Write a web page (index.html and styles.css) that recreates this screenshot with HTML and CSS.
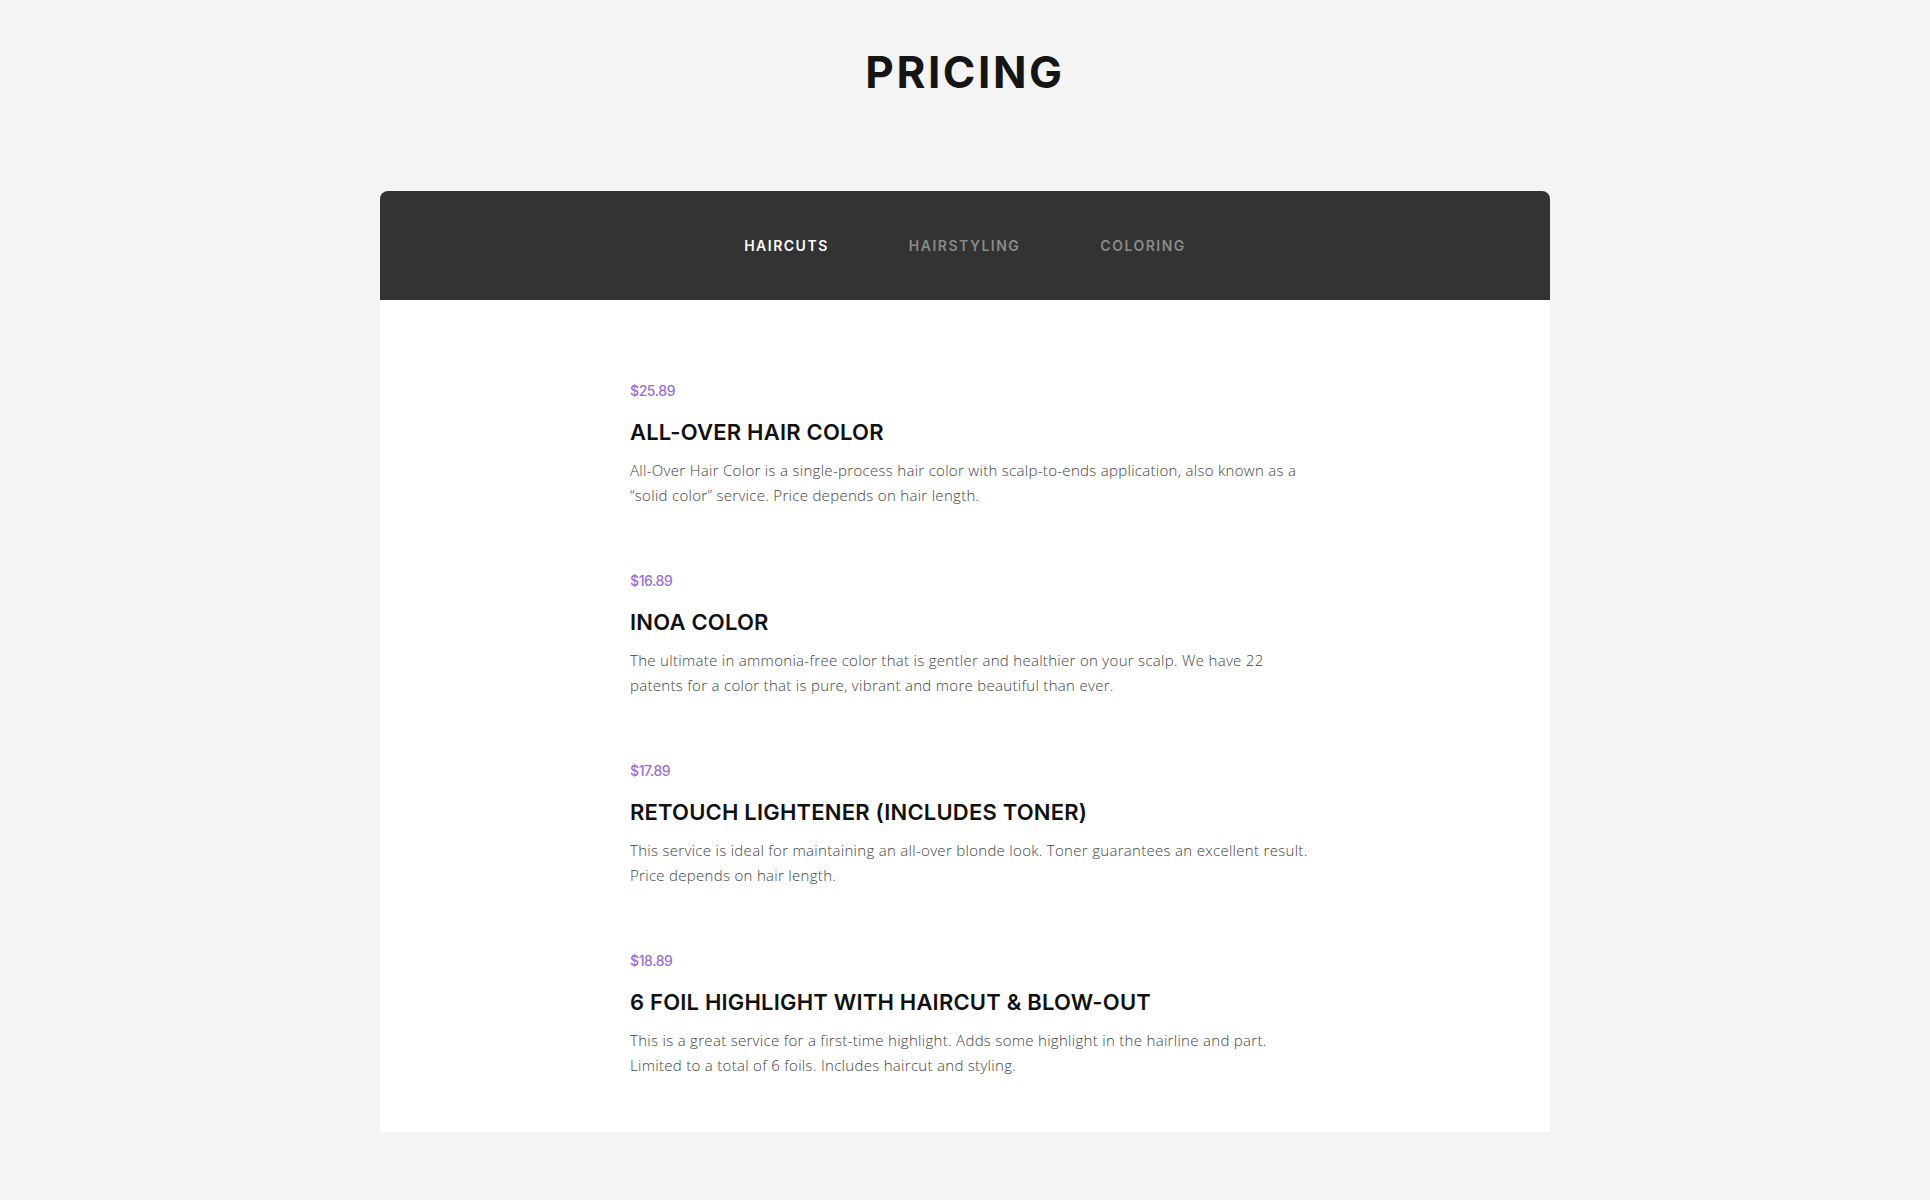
FILE: index.html
```html
<!DOCTYPE html>
<html lang="en">
  <head>
    <meta charset="UTF-8" />
    <meta name="viewport" content="width=device-width, initial-scale=1.0" />
    <title>Pricing</title>
    <link rel="stylesheet" href="styles.css">
  </head>
  <body>
    <section class="pricing">
      <h1 class="pricing-title">PRICING</h1>

      <div class="pricing-card">
        <!-- Pestañas -->
        <nav class="tabs">
          <a class="tab active" href="#">HAIRCUTS</a>
          <a class="tab" href="#">HAIRSTYLING</a>
          <a class="tab" href="#">COLORING</a>
        </nav>

        <div class="price-list">
          <div class="price-item">
            <p class="price">$25.89</p>
            <h2 class="item-title">ALL-OVER HAIR COLOR</h2>
            <p class="item-text">
              All-Over Hair Color is a single-process hair color with scalp-to-ends application, also known as a<br />
              “solid color” service. Price depends on hair length.
            </p>
          </div>
          <div class="price-item">
            <p class="price">$16.89</p>
            <h2 class="item-title">INOA COLOR</h2>
            <p class="item-text">
              The ultimate in ammonia-free color that is gentler and healthier on your scalp. We have 22<br />
              patents for a color that is pure, vibrant and more beautiful than ever.
            </p>
          </div>
          <div class="price-item">
            <p class="price">$17.89</p>
            <h2 class="item-title">RETOUCH LIGHTENER (INCLUDES TONER)</h2>
            <p class="item-text">
              This service is ideal for maintaining an all-over blonde look. Toner guarantees an excellent result.<br />
              Price depends on hair length.
            </p>
          </div>
          <div class="price-item">
            <p class="price">$18.89</p>
            <h2 class="item-title">6 FOIL HIGHLIGHT WITH HAIRCUT &amp; BLOW-OUT</h2>
            <p class="item-text">
              This is a great service for a first-time highlight. Adds some highlight in the hairline and part.<br />
              Limited to a total of 6 foils. Includes haircut and styling.
            </p>
          </div>
        </div>
      </div>
    </section>
  </body>
</html>
```

FILE: styles.css
```css
body {
  margin: 0;
  padding: 0;
  background: #f4f4f4;
  font-family: "Open Sans", sans-serif;
  color: #222;
  min-height: 100vh;
}

.pricing {
  display: flex;
  flex-direction: column;
  align-items: center;
  padding-top: 46px;
}

.pricing-title {
  font-family: "Inter", sans-serif;
  font-size: 44px;
  font-weight: 700;
  line-height: 52px;
  letter-spacing: 2.6px;
  color: #151515;
  margin: 0 0 93px 0;
}

.pricing-card {
  width: 1170px;
  background: white;
  border-radius: 8px 8px 0 0;
  overflow: hidden;
}

.tabs {
  height: 109px;
  background: #333;
  display: flex;
  justify-content: center;
  align-items: center;
  gap: 80px;
}

.tab {
  font-family: "Inter", sans-serif;
  font-size: 14px;
  font-weight: 600;
  letter-spacing: 1.5px;
  color: #8a8a8a;
  text-decoration: none;
}

.tab.active {
  color: white;
}

.price-list {
  width: 680px;
  margin: 0 auto;
  padding: 81px 0 54px 10px;
  display: flex;
  flex-direction: column;
  gap: 63px;
}

.price {
  font-family: "Inter", sans-serif;
  font-size: 14px;
  line-height: 20px;
  font-weight: 500;
  letter-spacing: -0.4px;
  color: #9a6ed6;
  margin: 0;
}

.item-title {
  font-family: "Inter", sans-serif;
  font-size: 22px;
  line-height: 28px;
  font-weight: 600;
  letter-spacing: 0.2px;
  color: #111;
  margin: 17px 0 12px 0;
}

.item-text {
  font-size: 15px;
  line-height: 25px;
  font-weight: 300;
  letter-spacing: 0.3px;
  color: #444;
  margin: 0;
}
```
